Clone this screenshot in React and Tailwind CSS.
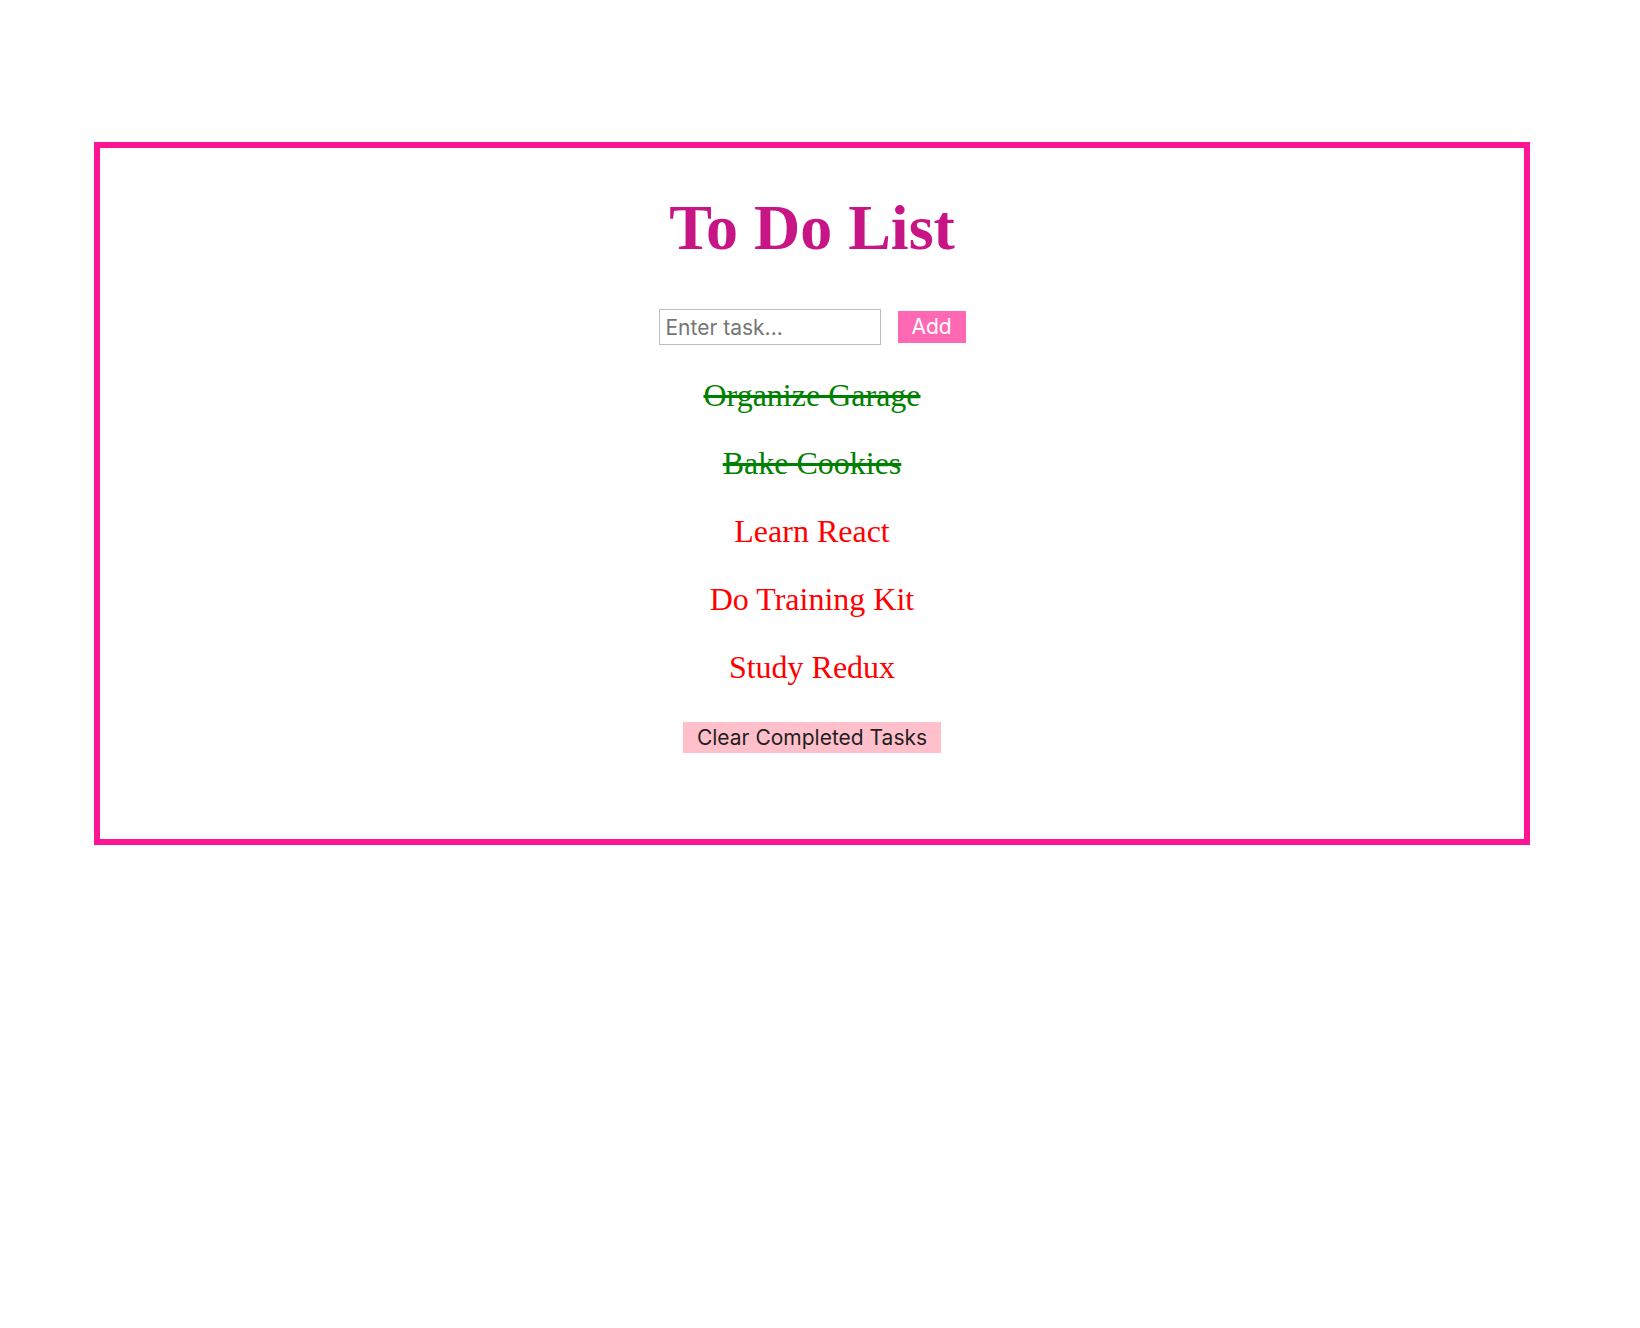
import React from "react";

const tasks = [
  { text: "Organize Garage", done: true },
  { text: "Bake Cookies", done: true },
  { text: "Learn React", done: false },
  { text: "Do Training Kit", done: false },
  { text: "Study Redux", done: false },
];

export default function App() {
  return (
    <div className="w-[1640px] h-[1328px] bg-white pt-[142px]">
      <div className="ml-[94px] w-[1436px] h-[703px] border-[6px] border-[#ff1493] flex flex-col items-center pt-[45px]">
        <h1 className="text-[64px] leading-[69px] font-bold text-[#c71585] font-['Liberation_Serif',serif]">
          To Do List
        </h1>
        <div className="mt-[47px] flex items-center gap-[17px] font-['Inter',sans-serif]">
          <input
            type="text"
            placeholder="Enter task..."
            className="w-[222px] h-[36px] border border-[#bdbdbd] px-[6px] text-[21px] text-black placeholder:text-[#757575] outline-none"
          />
          <button className="h-[32px] w-[68px] bg-[#ff69b4] text-white text-[21px] leading-[32px] text-center">
            Add
          </button>
        </div>
        <div className="mt-[16px] flex flex-col items-center font-['Liberation_Serif',serif]">
          {tasks.map((t) => (
            <div
              key={t.text}
              className={
                t.done
                  ? "h-[68px] leading-[68px] text-[32px] text-[#008000] line-through"
                  : "h-[68px] leading-[68px] text-[32px] text-[#ff0000]"
              }
            >
              {t.text}
            </div>
          ))}
        </div>
        <button className="mt-[21px] h-[31px] px-[14px] bg-[#ffc0cb] text-[#1f1f1f] text-[21px] leading-[31px] font-['Inter',sans-serif]">
          Clear Completed Tasks
        </button>
      </div>
    </div>
  );
}
